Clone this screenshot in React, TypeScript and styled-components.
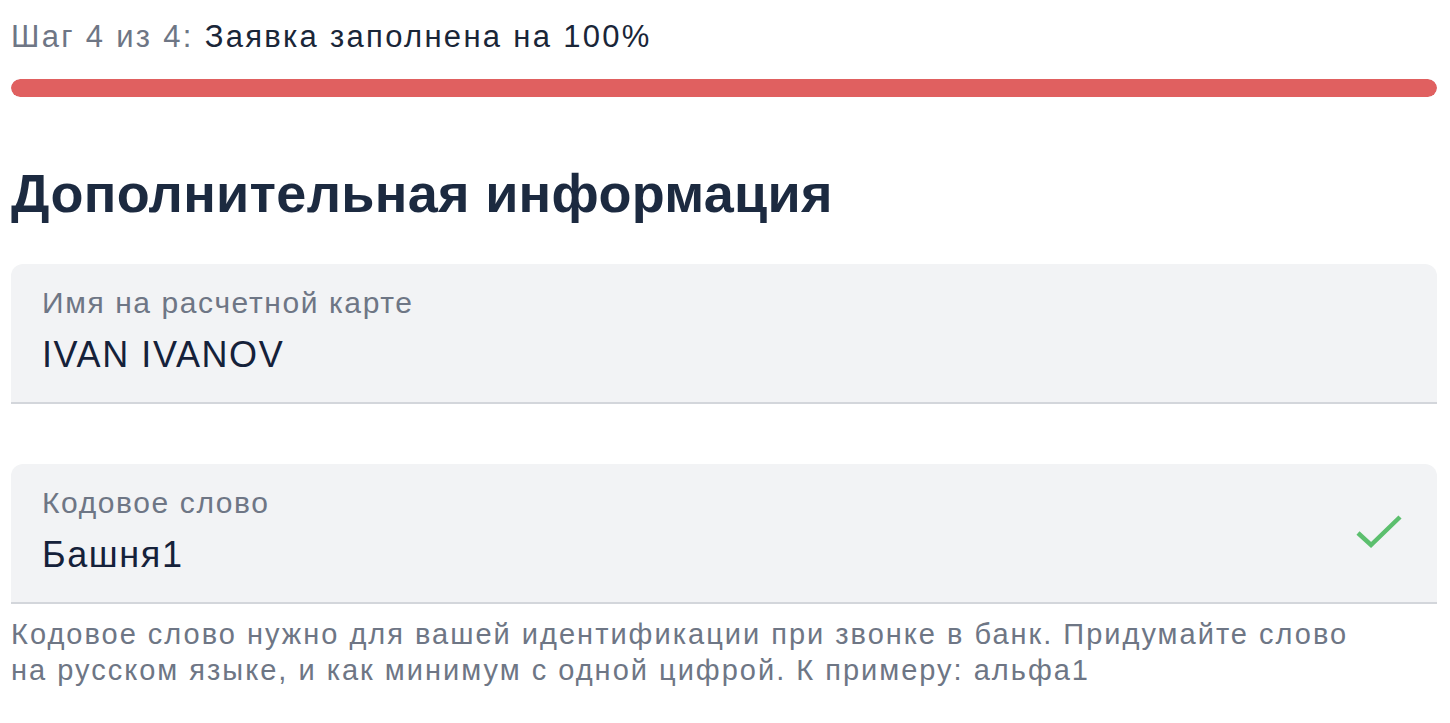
import React from 'react';
import styled, { createGlobalStyle } from 'styled-components';

const GlobalStyle = createGlobalStyle`
  body {
    margin: 0;
    background: #ffffff;
    font-family: 'Liberation Sans', Arial, sans-serif;
    color: #1a2638;
  }
`;

const Page = styled.div`
  padding: 17px 13px 0 11px;
`;

const StepText = styled.div`
  font-size: 31px;
  line-height: 40px;
  letter-spacing: 2.3px;
  color: #1a2638;

  span {
    color: #6e7685;
  }
`;

const Progress = styled.div`
  margin-top: 22px;
  height: 18px;
  border-radius: 9px;
  background: #eceef1;
  overflow: hidden;
`;

const ProgressFill = styled.div`
  height: 100%;
  border-radius: 9px;
  background: #e06060;
`;

const Title = styled.h1`
  margin: 64px 0 39px;
  font-size: 54px;
  line-height: 64px;
  font-weight: 700;
  letter-spacing: 0.3px;
  color: #1c2a40;
`;

const Field = styled.div<{ $gap?: number }>`
  display: flex;
  align-items: center;
  height: 140px;
  box-sizing: border-box;
  padding: 0 32px 0 31px;
  background: #f2f3f5;
  border-radius: 12px 12px 0 0;
  border-bottom: 2px solid #d3d6db;
  margin-top: ${(p) => p.$gap ?? 0}px;
`;

const FieldBody = styled.div`
  flex: 1;
  align-self: flex-start;
  padding-top: 22px;
  display: flex;
  flex-direction: column;
  gap: 13px;
`;

const Label = styled.div`
  font-size: 30px;
  line-height: 34px;
  letter-spacing: 1.6px;
  color: #6e7685;
`;

const Value = styled.div`
  font-size: 36px;
  line-height: 44px;
  letter-spacing: 1.6px;
  color: #15213a;
`;

const CheckIcon = styled.svg`
  width: 50px;
  height: 40px;
  flex-shrink: 0;
`;

const Hint = styled.p`
  margin: 12px 0 0;
  font-size: 29px;
  line-height: 36px;
  letter-spacing: 2px;
  color: #6e7685;
`;

export default function App() {
  const percent = 100;
  return (
    <>
      <GlobalStyle />
      <Page>
        <StepText>
          <span>Шаг 4 из 4:</span> Заявка заполнена на {percent}%
        </StepText>
        <Progress>
          <ProgressFill style={{ width: `${percent}%` }} />
        </Progress>
        <Title>Дополнительная информация</Title>
        <Field>
          <FieldBody>
            <Label>Имя на расчетной карте</Label>
            <Value>IVAN IVANOV</Value>
          </FieldBody>
        </Field>
        <Field $gap={60}>
          <FieldBody>
            <Label>Кодовое слово</Label>
            <Value>Башня1</Value>
          </FieldBody>
          <CheckIcon viewBox="0 0 50 40" fill="none">
            <path
              d="M3 20 L16 32 L45 4"
              stroke="#5cbf6e"
              strokeWidth="4.5"
              strokeLinecap="butt"
              strokeLinejoin="miter"
            />
          </CheckIcon>
        </Field>
        <Hint>
          Кодовое слово нужно для вашей идентификации при звонке в банк. Придумайте слово
          <br />
          на русском языке, и как минимум с одной цифрой. К примеру: альфа1
        </Hint>
      </Page>
    </>
  );
}
